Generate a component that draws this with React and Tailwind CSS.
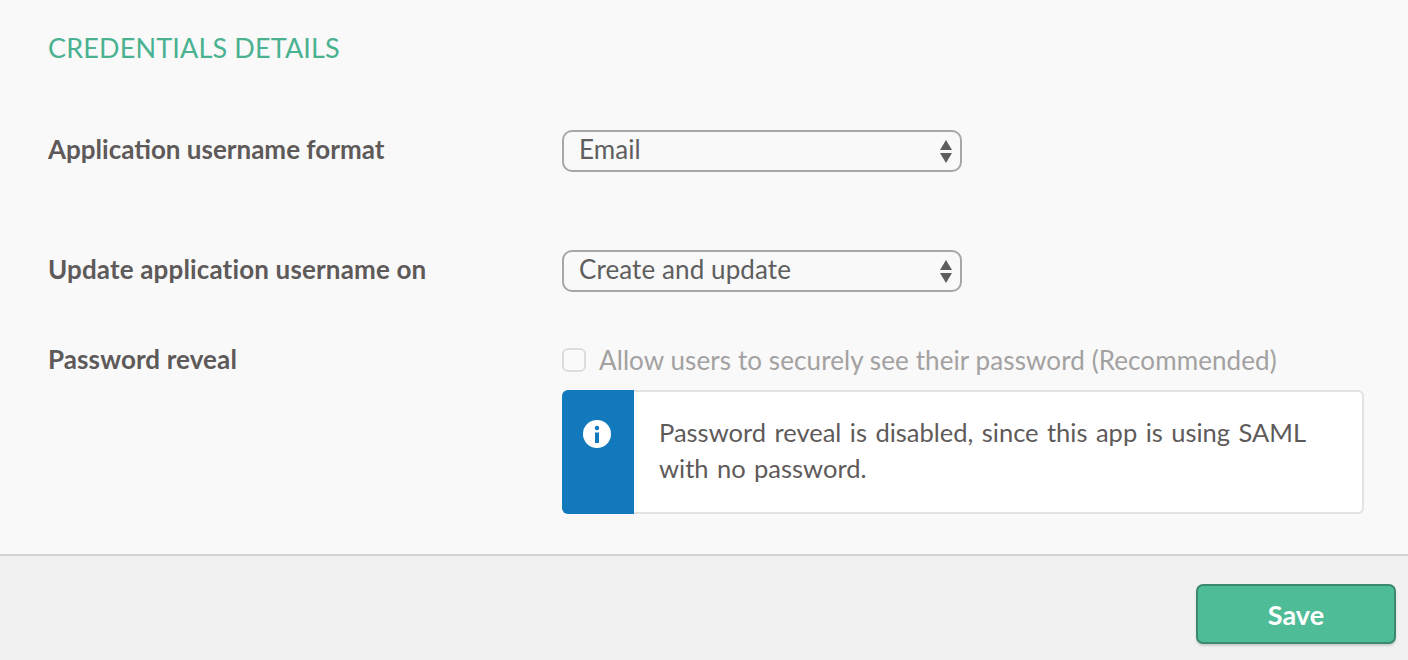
function FakeSelect({ value }) {
  return (
    <div className="w-[400px] h-[42px] border-2 border-[#a7a7a7] rounded-[10px] flex items-center justify-between pl-[15px] pr-2 text-[26px] tracking-[0.1px] text-[#5e5e5e]">
      <span className="-translate-y-[2px]">{value}</span>
      <svg width="12" height="23" viewBox="0 0 12 23" fill="#5e5e5e">
        <path d="M6 0 L12 10 L0 10 Z" />
        <path d="M0 13 L12 13 L6 23 Z" />
      </svg>
    </div>
  );
}

export default function App() {
  return (
    <div className="w-[1408px] h-[660px] overflow-hidden flex flex-col bg-[#f1f1f1] text-[#5e5a5a] [font-family:Lato,'Noto_Sans',sans-serif]">
      <div className="h-[556px] shrink-0 bg-[#f9f9f9] border-b-2 border-[#d4d4d4] pl-12 pr-11">
        {/* Heading */}
        <h2 className="pt-[31px] h-[130px] text-[27px] tracking-[0.15px] leading-[34px] text-[#4ab291]">CREDENTIALS DETAILS</h2>

        <div className="flex h-[120px]">
          <label className="w-[514px] text-[26px] font-bold leading-[38px]">Application username format</label>
          <FakeSelect value="Email" />
        </div>

        <div className="flex h-[98px]">
          <label className="w-[514px] text-[26px] tracking-[0.15px] font-bold leading-[38px]">Update application username on</label>
          <FakeSelect value="Create and update" />
        </div>

        <div className="flex">
          <label className="w-[514px] text-[26px] tracking-[0.1px] font-bold leading-[23px]">Password reveal</label>
          <div className="flex-1">
            <div className="flex items-center h-6 mb-[18px]">
              <span className="w-6 h-6 rounded-[6px] border-2 border-[#dcdcdc] bg-[#fbfbfb]" />
              <span className="ml-[13px] text-[26px] tracking-[0.1px] leading-[23px] text-[#a3a1a1] whitespace-nowrap">Allow users to securely see their password (Recommended)</span>
            </div>
            {/* Info box */}
            <div className="flex h-[124px] w-[802px] bg-white border-2 border-l-0 border-[#e2e2e2] rounded-[6px]">
              <div className="w-[72px] -my-[2px] bg-[#1279bd] rounded-l-[6px] pl-[21px] pt-[30px]">
                <svg width="28" height="28" viewBox="0 0 28 28">
                  <circle cx="14" cy="14" r="14" fill="#fff" />
                  <circle cx="14" cy="8" r="2.2" fill="#1279bd" />
                  <rect x="12" y="12.5" width="4" height="10.5" fill="#1279bd" />
                </svg>
              </div>
              <p className="pl-[25px] pt-[22px] w-[720px] text-[25.5px] [word-spacing:1.9px] leading-[36px]">
                Password reveal is disabled, since this app is using SAML
                <br />
                with no password.
              </p>
            </div>
          </div>
        </div>
      </div>

      {/* Footer */}
      <div className="flex-1 flex justify-end pt-[28px] pr-3">
        <button className="w-[200px] h-[60px] pt-[2px] rounded-[7px] bg-[#4fbc98] border-2 border-[#3b8a70] shadow-[0_2px_2px_rgba(0,0,0,0.15)] text-white text-[27px] font-bold">
          Save
        </button>
      </div>
    </div>
  );
}
